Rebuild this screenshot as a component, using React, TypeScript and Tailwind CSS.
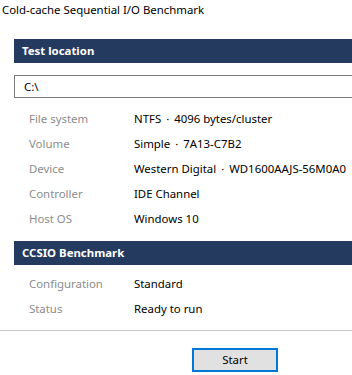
import React from "react";

const rows1: [string, string[]][] = [
  ["File system", ["NTFS", "4096 bytes/cluster"]],
  ["Volume", ["Simple", "7A13-C7B2"]],
  ["Device", ["Western Digital", "WD1600AAJS-56M0A0"]],
  ["Controller", ["IDE Channel"]],
  ["Host OS", ["Windows 10"]],
];

const rows2: [string, string[]][] = [
  ["Configuration", ["Standard"]],
  ["Status", ["Ready to run"]],
];

const Row = ({ label, parts }: { label: string; parts: string[] }) => (
  <div className="flex items-center h-[25px] whitespace-nowrap">
    <div className="pl-[29px] w-[134px] shrink-0 text-[#8c8c8c]">{label}</div>
    <div className="text-black">
      {parts.map((p, i) => (
        <React.Fragment key={p}>
          {i > 0 && <span className="mx-[5px]">&middot;</span>}
          {p}
        </React.Fragment>
      ))}
    </div>
  </div>
);

const SectionBar = ({ title }: { title: string }) => (
  <div className="ml-[14px] h-[24px] bg-[#243a5e] flex items-center pl-[8px] text-white font-bold">
    {title}
  </div>
);

export default function App() {
  return (
    <div className="w-[352px] h-[375px] bg-white overflow-hidden text-[11.4px] leading-[16px] font-['Noto_Sans',sans-serif] text-black">
      <div className="pl-[2px] pt-[2px] h-[39px]">Cold-cache Sequential I/O Benchmark</div>

      <SectionBar title="Test location" />

      <div className="ml-[14px] mt-[12px] h-[23px] border border-r-0 border-[#7a7a7a] flex items-center pl-[9px]">
        C:\
      </div>

      <div className="mt-[8px]">
        {rows1.map(([l, v]) => (
          <Row key={l} label={l} parts={v} />
        ))}
      </div>

      <div className="mt-[10px]">
        <SectionBar title="CCSIO Benchmark" />
      </div>

      <div className="mt-[6px]">
        {rows2.map(([l, v]) => (
          <Row key={l} label={l} parts={v} />
        ))}
      </div>

      <div className="mt-[9px] h-px bg-[#c8c8c8]" />

      <div className="mt-[17px] pl-[192px]">
        <button className="w-[86px] h-[24px] bg-[#e1e1e1] border-2 border-[#0078d7] flex items-center justify-center text-black">
          Start
        </button>
      </div>
    </div>
  );
}
